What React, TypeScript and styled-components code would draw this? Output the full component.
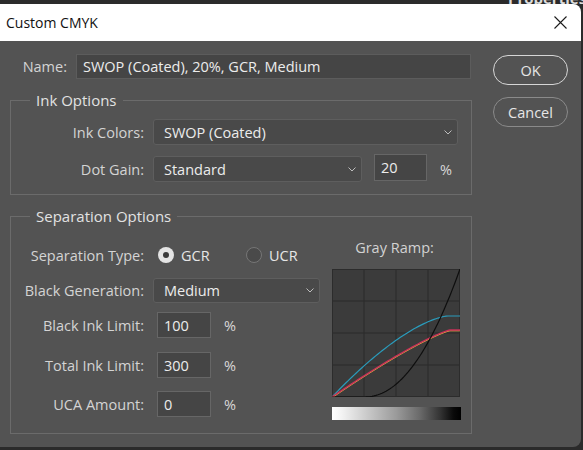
import React from "react";
import styled, { createGlobalStyle } from "styled-components";

const GlobalStyle = createGlobalStyle`
  html, body {
    margin: 0;
    padding: 0;
    background: #2b2b2b;
  }
  body {
    font-family: "Open Sans", "Noto Sans", sans-serif;
  }
`;

const Desktop = styled.div`
  position: relative;
  width: 583px;
  height: 450px;
  overflow: hidden;
  background: #2b2b2b;
`;

const BackdropTitle = styled.div`
  position: absolute;
  top: -12px;
  left: 508px;
  font-size: 15px;
  font-weight: 700;
  color: #dcdcdc;
`;

const Dialog = styled.div`
  position: absolute;
  left: 0;
  top: 4px;
  width: 581px;
  height: 443px;
  border-radius: 0 8px 8px 0;
  overflow: hidden;
  background: #535353;
  display: flex;
  flex-direction: column;
`;

const TitleBar = styled.div`
  height: 37px;
  flex: none;
  background: #ffffff;
  display: flex;
  align-items: center;
  justify-content: space-between;
  padding: 0 14px 0 6px;
`;

const Title = styled.span`
  font-size: 14px;
  color: #111;
`;

const Body = styled.div`
  display: flex;
  padding: 13px 0 0 10px;
`;

const MainCol = styled.div`
  width: 462px;
  display: flex;
  flex-direction: column;
`;

const ButtonCol = styled.div`
  width: 75px;
  margin: 1px 0 0 21px;
  display: flex;
  flex-direction: column;
  gap: 12px;
`;

const PillButton = styled.button<{ $primary?: boolean }>`
  height: 30px;
  border-radius: 15px;
  background: transparent;
  border: ${p => (p.$primary ? "1.5px solid #d6d6d6" : "1px solid #8a8a8a")};
  color: #e6e6e6;
  font-family: inherit;
  font-size: 14.5px;
  padding: 0;
`;

const NameRow = styled.div`
  display: flex;
  align-items: center;
  height: 25px;
`;

const Label = styled.label<{ $w: number }>`
  width: ${p => p.$w}px;
  flex: none;
  margin-right: 9px;
  text-align: right;
  font-size: 14.5px;
  color: #d4d4d4;
  white-space: nowrap;
`;

const Field = styled.div<{ $w: number; $h?: number }>`
  box-sizing: border-box;
  width: ${p => p.$w}px;
  height: ${p => p.$h ?? 26}px;
  flex: none;
  display: flex;
  align-items: center;
  padding: 0 6px;
  background: #454545;
  border: 1px solid #666;
  font-size: 14.5px;
  color: #ececec;
`;

const NameField = styled(Field)`
  border-color: #5c5c5c;
`;

const SelectBox = styled.div<{ $w: number; $h?: number }>`
  box-sizing: border-box;
  width: ${p => p.$w}px;
  height: ${p => p.$h ?? 26}px;
  flex: none;
  display: flex;
  align-items: center;
  justify-content: space-between;
  padding: 0 5px 0 10px;
  background: #494949;
  border: 1px solid #5e5e5e;
  border-radius: 3px;
  font-size: 14.5px;
  color: #ececec;
`;

const Group = styled.fieldset<{ $mt: number; $pb: number }>`
  box-sizing: border-box;
  width: 100%;
  min-width: 0;
  margin: ${p => p.$mt}px 0 0;
  padding: 0 0 ${p => p.$pb}px;
  border: 1px solid #6b6b6b;
`;

const Legend = styled.legend`
  margin-left: 19px;
  padding: 0 6px;
  line-height: 20px;
  font-size: 15px;
  color: #e2e2e2;
`;

const Row = styled.div<{ $mt: number; $h?: number }>`
  display: flex;
  align-items: center;
  height: ${p => p.$h ?? 26}px;
  margin-top: ${p => p.$mt}px;
`;

const Percent = styled.span<{ $ml: number }>`
  margin-left: ${p => p.$ml}px;
  font-size: 14.5px;
  color: #d8d8d8;
`;

const SepLayout = styled.div`
  display: flex;
  align-items: flex-start;
`;

const FormCol = styled.div`
  display: flex;
  flex-direction: column;
  padding-bottom: 2px;
`;

const RadioOption = styled.div<{ $w?: number }>`
  display: flex;
  align-items: center;
  width: ${p => (p.$w ? `${p.$w}px` : "auto")};
  font-size: 14.5px;
  color: #e6e6e6;
`;

const RadioDot = styled.span<{ $checked?: boolean }>`
  box-sizing: border-box;
  width: 16px;
  height: 16px;
  border-radius: 50%;
  margin-right: 7px;
  display: flex;
  align-items: center;
  justify-content: center;
  background: ${p => (p.$checked ? "#e4e4e4" : "#4a4a4a")};
  border: ${p => (p.$checked ? "none" : "1px solid #767676")};
  &::after {
    content: "";
    width: 6px;
    height: 6px;
    border-radius: 50%;
    background: #3a3a3a;
    display: ${p => (p.$checked ? "block" : "none")};
  }
`;

const RampCol = styled.div`
  width: 129px;
  margin: 12px 0 0 12px;
  display: flex;
  flex-direction: column;
  align-items: center;
`;

const RampLabel = styled.div`
  line-height: 20px;
  font-size: 14.5px;
  color: #d2d2d2;
  margin-left: -4px;
`;

const Graph = styled.svg`
  display: block;
  margin-top: 11px;
  width: 128px;
  height: 128px;
  align-self: flex-start;
`;

const GradientBar = styled.div`
  margin-top: 10px;
  width: 129px;
  height: 13px;
  background: linear-gradient(
    to right,
    #ffffff 0%,
    #f2f2f2 8%,
    #c8c8c8 28%,
    #9a9a9a 50%,
    #6a6a6a 68%,
    #333333 84%,
    #0a0a0a 94%,
    #000000 100%
  );
`;

const Chevron = () => (
  <svg width="8" height="5" viewBox="0 0 8 5">
    <polyline points="0.5,0.5 4,4 7.5,0.5" fill="none" stroke="#bdbdbd" strokeWidth="1" />
  </svg>
);

const CloseIcon = () => (
  <svg width="13" height="13" viewBox="0 0 13 13">
    <path d="M0.5 0.5 L12.5 12.5 M12.5 0.5 L0.5 12.5" stroke="#1c1c1c" strokeWidth="1.1" />
  </svg>
);

const curve = (fn: (x: number) => number) => {
  const pts: string[] = [];
  for (let x = 0; x <= 128; x += 2) pts.push(`${x},${(128 - fn(x)).toFixed(2)}`);
  return pts.join(" ");
};

const blackFn = (x: number) => (x <= 32 ? 0 : 128 * Math.pow((x - 32) / 96, 2.1));
const cyanFn = (x: number) => (x >= 116 ? 81 : 81 * (1 - Math.pow(1 - x / 116, 1.5)));
const redFn = (x: number) => (x >= 118 ? 67 : 67 * (1 - Math.pow(1 - x / 118, 1.2)));

const GrayRamp = () => (
  <Graph viewBox="0 0 128 128">
    <rect x="0" y="0" width="128" height="128" fill="#3b3b3b" />
    {[32, 64, 96].map(v => (
      <g key={v}>
        <line x1={v} y1="0" x2={v} y2="128" stroke="#2a2a2a" strokeWidth="1" />
        <line x1="0" y1={v} x2="128" y2={v} stroke="#2a2a2a" strokeWidth="1" />
      </g>
    ))}
    <rect x="0.5" y="0.5" width="127" height="127" fill="none" stroke="#2c2c2c" strokeWidth="1" />
    <polyline points={curve(x => cyanFn(x))} fill="none" stroke="#2a9cbc" strokeWidth="1.2" />
    <polyline points={curve(x => redFn(x) - 0.8)} fill="none" stroke="#e6b23a" strokeWidth="1" />
    <polyline points={curve(x => redFn(x))} fill="none" stroke="#c8325a" strokeWidth="1.4" />
    <polyline points={curve(x => blackFn(x))} fill="none" stroke="#0e0e0e" strokeWidth="1.2" />
  </Graph>
);

export default function App() {
  return (
    <>
      <GlobalStyle />
      <Desktop>
        <BackdropTitle>Properties</BackdropTitle>
        <Dialog>
          <TitleBar>
            <Title>Custom CMYK</Title>
            <CloseIcon />
          </TitleBar>
          <Body>
            <MainCol>
              <NameRow>
                <Label $w={57}>Name:</Label>
                <NameField $w={395} $h={25}>SWOP (Coated), 20%, GCR, Medium</NameField>
              </NameRow>

              <Group $mt={11} $pb={12}>
                <Legend>Ink Options</Legend>
                <Row $mt={9}>
                  <Label $w={133}>Ink Colors:</Label>
                  <SelectBox $w={305}>
                    SWOP (Coated)
                    <Chevron />
                  </SelectBox>
                </Row>
                <Row $mt={11}>
                  <Label $w={133}>Dot Gain:</Label>
                  <SelectBox $w={209}>
                    Standard
                    <Chevron />
                  </SelectBox>
                  <Field $w={53} $h={27} style={{ marginLeft: 12, marginTop: -3 }}>20</Field>
                  <Percent $ml={13}>%</Percent>
                </Row>
              </Group>

              <Group $mt={11} $pb={13}>
                <Legend>Separation Options</Legend>
                <SepLayout>
                  <FormCol>
                    <Row $mt={16}>
                      <Label $w={133}>Separation Type:</Label>
                      <RadioOption $w={88} style={{ marginLeft: 5 }}>
                        <RadioDot $checked />
                        GCR
                      </RadioOption>
                      <RadioOption>
                        <RadioDot />
                        UCR
                      </RadioOption>
                    </Row>
                    <Row $mt={10} $h={25}>
                      <Label $w={133}>Black Generation:</Label>
                      <SelectBox $w={167} $h={25}>
                        Medium
                        <Chevron />
                      </SelectBox>
                    </Row>
                    <Row $mt={9}>
                      <Label $w={133}>Black Ink Limit:</Label>
                      <Field $w={54} style={{ marginLeft: 4 }}>100</Field>
                      <Percent $ml={13}>%</Percent>
                    </Row>
                    <Row $mt={14}>
                      <Label $w={133}>Total Ink Limit:</Label>
                      <Field $w={54} style={{ marginLeft: 4 }}>300</Field>
                      <Percent $ml={13}>%</Percent>
                    </Row>
                    <Row $mt={13}>
                      <Label $w={133}>UCA Amount:</Label>
                      <Field $w={54} style={{ marginLeft: 4 }}>0</Field>
                      <Percent $ml={13}>%</Percent>
                    </Row>
                  </FormCol>
                  <RampCol>
                    <RampLabel>Gray Ramp:</RampLabel>
                    <GrayRamp />
                    <GradientBar />
                  </RampCol>
                </SepLayout>
              </Group>
            </MainCol>
            <ButtonCol>
              <PillButton $primary>OK</PillButton>
              <PillButton>Cancel</PillButton>
            </ButtonCol>
          </Body>
        </Dialog>
      </Desktop>
    </>
  );
}
